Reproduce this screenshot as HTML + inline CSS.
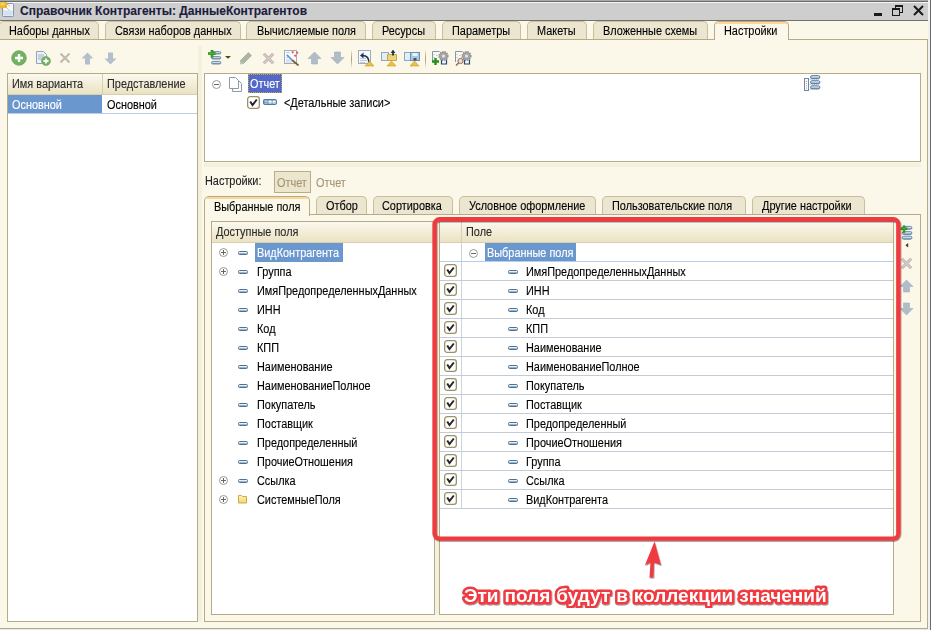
<!DOCTYPE html>
<html><head><meta charset="utf-8">
<style>
*{box-sizing:border-box;margin:0;padding:0}
html,body{width:931px;height:630px;overflow:hidden;background:#e6e6e6}
body{position:relative;font-family:"Liberation Sans",sans-serif;font-size:11px;color:#000}
.a{position:absolute}
.t{position:absolute;white-space:nowrap;line-height:13px;font-size:12px;margin-top:1px;transform:scaleX(0.908);transform-origin:0 0;-webkit-text-stroke:0.12px currentColor}
.t.nt{transform:none;margin-top:0}
#title{left:0;top:0;width:931px;height:21px;background:#cecece;border-top:2px solid #6c6c6c;border-bottom:1px solid #717171;box-shadow:inset 0 0 0 0 #000}
#title:after{content:"";position:absolute;left:0;right:0;top:-2px;height:1px;background:#a9a9a9}
#title:before{content:"";position:absolute;left:0;right:0;top:0;height:1px;background:#f4f4f4}
#main{left:0;top:21px;width:928px;height:608px;background:#fbf8ea;border-bottom:1px solid #b5ab87}
.tab{position:absolute;height:18px;background:#ece6d0;border:1px solid #c9bf9c;border-bottom:none;border-radius:5px 5px 0 0}
.tab .t{top:2px}
.tab.act{background:#fbf8ea;border-color:#b5ab87;height:19px}
.tab.act:before{content:"";position:absolute;left:1px;right:1px;top:0;height:2px;background:#fbd899;border-radius:3px 3px 0 0}
.box{position:absolute;background:#fff;border:1px solid #b5ab87}
.hdr{position:absolute;background:linear-gradient(#fbf9ef,#ebe2c2);border-bottom:1px solid #d8cfae}
.sel{position:absolute;background:#6b97cf;color:#fff}
.row{position:absolute;height:1px;background:#c3ccd6}
.pl{position:absolute;width:9px;height:9px;border:1px solid #9a9a9a;border-radius:50%}
.pl:before{content:"";position:absolute;left:1px;top:3px;width:5px;height:1px;background:#666}
.pl.plus:after{content:"";position:absolute;left:3px;top:1px;width:1px;height:5px;background:#666}
.fld{position:absolute;width:10px;height:4px;border-radius:1.5px;background:linear-gradient(#e8f1f8 25%,#7496b6);border:1px solid #4f7191}
.cb{position:absolute;width:13px;height:13px;border:1px solid #a09570;border-radius:3px;background:#fff}
.cb:after{content:"";position:absolute;left:3px;top:1px;width:4px;height:7px;border-right:2px solid #222;border-bottom:2px solid #222;transform:rotate(40deg)}
</style></head><body>

<!-- title bar -->
<div id="title" class="a">
  <svg class="a" style="left:0;top:-2px" width="16" height="18" viewBox="0 0 16 18">
    <rect x="2.5" y="3.5" width="11" height="13" rx="1" fill="#f6f9fc" stroke="#7f98ad"/>
    <rect x="3.3" y="10.5" width="9.4" height="5.2" fill="#d3e2ee"/>
    <rect x="0" y="2" width="7" height="6" fill="#e7b834"/>
    <rect x="0.5" y="2.5" width="4" height="3" fill="#f4d25c"/>
    <path d="M1.5 8.5l2 2M7.5 4.5l2 1.5M7.5 8.5l2 2" stroke="#d08f1c" stroke-width="1" stroke-dasharray="1 0.6"/>
  </svg>
  <div class="t nt" style="left:20px;top:3px;font-weight:bold;font-size:12px;color:#1c1c3c">Справочник Контрагенты: ДанныеКонтрагентов</div>
  <div class="a" style="left:874px;top:11px;width:8px;height:3px;background:#1a1a1a"></div>
  <div class="a" style="left:895px;top:3px;width:8px;height:8px;border:1px solid #1a1a1a;border-top-width:2px"></div>
  <div class="a" style="left:892px;top:6px;width:8px;height:8px;border:1px solid #1a1a1a;border-top-width:2px;background:#cacaca"></div>
  <svg class="a" style="left:913px;top:3px" width="11" height="11" viewBox="0 0 11 11"><path d="M1 1L10 10M10 1L1 10" stroke="#1a1a1a" stroke-width="2"/></svg>
</div>
<div class="a" style="left:928px;top:0;width:3px;height:630px;background:#f0f0f0;border-right:1px solid #6a6a6a"></div>

<div id="main" class="a">
</div>
<div class="a" style="left:927px;top:39px;width:1px;height:590px;background:#b5ab87"></div>

<!-- top tabs -->
<div class="tab" style="left:-1px;top:21px;width:100px"><div class="t" style="left:9px">Наборы данных</div></div>
<div class="tab" style="left:105px;top:21px;width:136px"><div class="t" style="left:9px">Связи наборов данных</div></div>
<div class="tab" style="left:246px;top:21px;width:120px"><div class="t" style="left:10px">Вычисляемые поля</div></div>
<div class="tab" style="left:372px;top:21px;width:64px"><div class="t" style="left:9px">Ресурсы</div></div>
<div class="tab" style="left:442px;top:21px;width:79px"><div class="t" style="left:9px">Параметры</div></div>
<div class="tab" style="left:527px;top:21px;width:60px"><div class="t" style="left:9px">Макеты</div></div>
<div class="tab" style="left:593px;top:21px;width:115px"><div class="t" style="left:9px">Вложенные схемы</div></div>
<div class="a" style="left:0;top:39px;width:928px;height:1px;background:#b5ab87"></div>
<div class="tab act" style="left:714px;top:21px;width:75px;height:19px"><div class="t" style="left:9px">Настройки</div></div>

<!-- left toolbar -->
<svg class="a" style="left:11px;top:50px" width="16" height="16" viewBox="0 0 16 16">
  <circle cx="8" cy="8" r="7.3" fill="#6fb45a" stroke="#7a9a70" stroke-width="0.8"/>
  <path d="M8 4v8M4 8h8" stroke="#fff" stroke-width="2.4"/>
</svg>
<svg class="a" style="left:35px;top:50px" width="16" height="16" viewBox="0 0 16 16">
  <path d="M1.5 1.5h7l3 3v9h-10z" fill="#eef2f7" stroke="#8ea4bd"/>
  <path d="M3 5h6M3 7h6M3 9h5" stroke="#9fb1c5"/>
  <circle cx="11" cy="11" r="4.5" fill="#6fb45a" stroke="#7a9a70" stroke-width="0.6"/>
  <path d="M11 8.5v5M8.5 11h5" stroke="#fff" stroke-width="1.8"/>
</svg>
<svg class="a" style="left:59px;top:52px" width="12" height="12" viewBox="0 0 12 12"><path d="M1.5 1.5l9 9M10.5 1.5l-9 9" stroke="#c3b9ae" stroke-width="2.2"/></svg>
<svg class="a" style="left:81px;top:52px" width="13" height="13" viewBox="0 0 13 13"><path d="M6.5 0.5L12.5 6.5H9V12.5H4V6.5H0.5Z" fill="#b3c0cc"/></svg>
<svg class="a" style="left:104px;top:52px" width="13" height="13" viewBox="0 0 13 13"><path d="M6.5 12.5L12.5 6.5H9V0.5H4V6.5H0.5Z" fill="#b3c0cc"/></svg>

<!-- left variants table -->
<div class="box" style="left:7px;top:73px;width:191px;height:549px">
  <div class="hdr" style="left:0;top:0;width:189px;height:21px"></div>
  <div class="a" style="left:94px;top:0;width:1px;height:21px;background:#d8cfae"></div>
  <div class="t" style="left:4px;top:3px;color:#2b2b2b">Имя варианта</div>
  <div class="t" style="left:99px;top:3px;color:#2b2b2b">Представление</div>
  <div class="sel" style="left:0;top:21px;width:94px;height:18px"></div>
  <div class="t" style="left:4px;top:24px;color:#fff">Основной</div>
  <div class="t" style="left:99px;top:24px">Основной</div>
  <div class="row" style="left:0;top:39px;width:189px;background:#b8cde6"></div>
</div>
<div class="a" style="left:198px;top:46px;width:4px;height:576px;background:#f3f0de"></div>

<!-- right toolbar -->
<div id="rtb">
<svg class="a" style="left:206px;top:48px" width="28" height="18" viewBox="0 0 28 18">
  <defs><linearGradient id="bar" x1="0" y1="0" x2="0" y2="1"><stop offset="0" stop-color="#e6eff7"/><stop offset="0.45" stop-color="#c5d7e7"/><stop offset="1" stop-color="#6f93b5"/></linearGradient></defs>
  <rect x="5.6" y="3.6" width="9.2" height="2.4" rx="1.2" fill="url(#bar)" stroke="#4f7396" stroke-width="0.8"/>
  <rect x="5.6" y="8.6" width="9.2" height="2.4" rx="1.2" fill="url(#bar)" stroke="#4f7396" stroke-width="0.8"/>
  <rect x="5.6" y="13.4" width="9.2" height="2.6" rx="1.2" fill="url(#bar)" stroke="#4f7396" stroke-width="0.8"/>
  <path d="M6 2v7.5M2 5.5h7.5" stroke="#227a14" stroke-width="2.6"/>
  <path d="M6 2.4v6.7M2.4 5.5h6.7" stroke="#45b82c" stroke-width="1.2"/>
  <path d="M19 8h6l-3 2.8z" fill="#5a4214"/>
</svg>
<svg class="a" style="left:239px;top:51px" width="14" height="14" viewBox="0 0 14 14">
  <path d="M1.5 13L1.5 9.5L9.5 1.5L12.5 4.5L4.5 12.5Z" fill="#aab6a2" stroke="#98a48f" stroke-width="0.6"/>
  <path d="M1.5 13L1.5 10L4 12.5Z" fill="#c9d0c2"/>
</svg>
<svg class="a" style="left:262px;top:52px" width="13" height="13" viewBox="0 0 13 13"><path d="M1.8 1.8l9.4 9.4M11.2 1.8l-9.4 9.4" stroke="#baaeaa" stroke-width="3"/><path d="M1.8 1.8l9.4 9.4M11.2 1.8l-9.4 9.4" stroke="#d6ccca" stroke-width="1.4"/></svg>
<svg class="a" style="left:283px;top:49px" width="17" height="17" viewBox="0 0 17 17">
  <rect x="1.5" y="1.5" width="12" height="13" fill="#f7f9fb" stroke="#9cadbd"/>
  <path d="M3 3.5h4M3 8.5h2M3 11h5M3 13h6" stroke="#b5c3d0" stroke-width="0.8"/>
  <path d="M9 11L15.5 16.5" stroke="#8a5a30" stroke-width="1.7"/>
  <path d="M3.8 5.8L9 11" stroke="#5a9ad6" stroke-width="1.7"/>
  <path d="M8.5 3.2h2.4M9.7 2v2.4M13 3.7h2.4M14.2 2.5v2.4M11 6.7h2.4M12.2 5.5v2.4" stroke="#f04848" stroke-width="0.9"/>
</svg>
<svg class="a" style="left:307px;top:51px" width="15" height="14" viewBox="0 0 15 14"><path d="M7.5 1L14 7.5H10.5V13H4.5V7.5H1Z" fill="#b0bcc7" stroke="#a2aeb9" stroke-width="0.6"/></svg>
<svg class="a" style="left:330px;top:51px" width="15" height="14" viewBox="0 0 15 14"><path d="M7.5 13L14 6.5H10.5V1H4.5V6.5H1Z" fill="#b0bcc7" stroke="#a2aeb9" stroke-width="0.6"/></svg>
<div class="a" style="left:351px;top:50px;width:1px;height:18px;background:linear-gradient(#f6f2e0,#b3a77f 40%,#b3a77f 60%,#f6f2e0)"></div>
<svg class="a" style="left:357px;top:49px" width="18" height="18" viewBox="0 0 18 18">
  <rect x="1.5" y="1.5" width="12" height="13" fill="#f7f9fb" stroke="#9cadbd"/>
  <path d="M3 9.5h6M3 11.5h7M3 13.5h5" stroke="#b5c3d0" stroke-width="0.8"/>
  <path d="M12 14C12 9 10 6.5 5.5 6.5" stroke="#1f3553" stroke-width="1.6" fill="none"/>
  <path d="M3 6.5L6.5 3.5V9.5Z" fill="#1f3553"/>
  <path d="M8 17L12.5 12L17 17Z" fill="#e9c24a" stroke="#c89a22" stroke-width="0.6"/>
</svg>
<svg class="a" style="left:380px;top:49px" width="18" height="18" viewBox="0 0 18 18">
  <rect x="1.5" y="3.5" width="7" height="8" fill="#e3edf6" stroke="#8ea7bf"/>
  <path d="M7.5 5.5h9v6h-9z" fill="#ecd37c" stroke="#c9a544"/>
  <path d="M13 1.5v5" stroke="#1d3350" stroke-width="1.8"/>
  <path d="M10.5 4L13 1L15.5 4Z" fill="#1d3350"/>
  <path d="M7 17L11.5 12L16 17Z" fill="#e9c24a" stroke="#c89a22" stroke-width="0.6"/>
</svg>
<svg class="a" style="left:403px;top:49px" width="18" height="18" viewBox="0 0 18 18">
  <rect x="1.5" y="3.5" width="7" height="8" fill="#e3edf6" stroke="#8ea7bf"/>
  <rect x="7.5" y="3.5" width="9" height="8" fill="#a9c9e2" stroke="#6b8fb0"/>
  <rect x="9.5" y="4" width="5" height="3" fill="#eef3f8"/>
  <rect x="10.5" y="9" width="3" height="2.5" fill="#3a5572"/>
  <path d="M7 17L11.5 12L16 17Z" fill="#e9c24a" stroke="#c89a22" stroke-width="0.6"/>
</svg>
<div class="a" style="left:425px;top:50px;width:1px;height:18px;background:linear-gradient(#f6f2e0,#b3a77f 40%,#b3a77f 60%,#f6f2e0)"></div>
<svg class="a" style="left:431px;top:49px" width="18" height="18" viewBox="0 0 18 18">
  <path d="M1.5 13V2.5h4M4.5 2.5h4" stroke="#7d98b5" fill="none"/>
  <path d="M3 5v1M3 8v1M6 6v1" stroke="#9aaec3"/>
  <path d="M10.5 10.5v4.5h5v-4.5" stroke="#27496b" stroke-width="1.2" fill="#f2f6fa"/>
  <circle cx="12.5" cy="7" r="4.3" fill="#a5a5a5" stroke="#8a8a8a" stroke-width="1.5" stroke-dasharray="1.3 1"/>
  <circle cx="12.5" cy="7" r="1.5" fill="#e8e8e8"/>
  <path d="M4.5 9v7M1 12.5h7" stroke="#23911a" stroke-width="2.4"/>
</svg>
<svg class="a" style="left:454px;top:49px" width="18" height="18" viewBox="0 0 18 18">
  <path d="M1.5 13V2.5h4M4.5 2.5h4" stroke="#7d98b5" fill="none"/>
  <path d="M3 5v1M3 8v1M6 6v1" stroke="#9aaec3"/>
  <path d="M10.5 10.5v4.5h5v-4.5" stroke="#27496b" stroke-width="1.2" fill="#f2f6fa"/>
  <circle cx="12.5" cy="7" r="4.3" fill="#a5a5a5" stroke="#8a8a8a" stroke-width="1.5" stroke-dasharray="1.3 1"/>
  <circle cx="12.5" cy="7" r="1.5" fill="#e8e8e8"/>
  <path d="M2 16.5L4.5 14" stroke="#a5693d" stroke-width="1.6"/>
  <circle cx="6.5" cy="12" r="2.6" fill="#cfe0f2" stroke="#a5693d" stroke-width="1"/>
</svg>
</div>


<!-- top tree panel -->
<div class="box" style="left:204px;top:73px;width:717px;height:89px">
  <div class="pl" style="left:7px;top:6px"></div>
  <svg class="a" style="left:24px;top:3px" width="14" height="15" viewBox="0 0 14 15">
    <path d="M3.5 3.5h6l3 3v8h-9z" fill="#fff" stroke="#8d9aa8"/>
    <path d="M0.5 0.5h6l3 3v8h-9z" fill="#fff" stroke="#8d9aa8"/>
  </svg>
  <div class="a" style="left:43px;top:0px;width:34px;height:19px;background:#5468c7;outline:1px dotted #c9a64a;outline-offset:-1px"></div>
  <div class="t" style="left:45px;top:3px;color:#fff">Отчет</div>
  <svg class="a" style="left:42px;top:22px" width="13" height="13" viewBox="0 0 13 13"><rect x="0.65" y="0.65" width="11.7" height="11.7" rx="2.6" fill="#fff" stroke="#9b9169" stroke-width="1.3"/><path d="M3.2 5.5L5.5 9L9.8 3.5" stroke="#262626" stroke-width="2" fill="none"/></svg>
  <svg class="a" style="left:58px;top:25px" width="14" height="6" viewBox="0 0 14 6"><rect x="0.5" y="0.5" width="13" height="5" rx="1.2" fill="#6a93bd" stroke="#4f7aa3"/><rect x="1.6" y="1.6" width="3" height="1" fill="#e8f0f8"/><rect x="1.6" y="3.4" width="3" height="1.6" fill="#9ebbd8"/><rect x="5.6" y="1.5" width="3" height="3" fill="#fff"/><rect x="9.6" y="1.5" width="3" height="3" fill="#fff"/><rect x="6.7" y="3" width="0.8" height="1" fill="#8aa"/><rect x="10.7" y="3" width="0.8" height="1" fill="#8aa"/></svg>
  <div class="t" style="left:79px;top:22px">&lt;Детальные записи&gt;</div>
  <svg class="a" style="left:598px;top:0px" width="18" height="18" viewBox="0 0 18 18">
    <path d="M5.5 5.5H16M5.5 10.5H16M5.5 15.5H16" stroke="#c3cad2" stroke-dasharray="1.2 0.6"/>
    <rect x="1.5" y="4.5" width="4" height="12" fill="#fff" stroke="#75869a"/>
    <path d="M3.5 7v8" stroke="#8a98a8" stroke-dasharray="1 1.2"/>
    <rect x="7.5" y="1.6" width="9.4" height="3" rx="1.5" fill="url(#bar)" stroke="#4f7396" stroke-width="0.9"/>
    <rect x="7.5" y="6.7" width="9.4" height="3" rx="1.5" fill="url(#bar)" stroke="#4f7396" stroke-width="0.9"/>
    <rect x="7.5" y="11.8" width="9.4" height="3" rx="1.5" fill="url(#bar)" stroke="#4f7396" stroke-width="0.9"/>
  </svg>
</div>
<div class="a" style="left:204px;top:163px;width:717px;height:4px;background:#f3f0de"></div>

<!-- settings line -->
<div class="t" style="left:205px;top:174px;color:#222">Настройки:</div>
<div class="a" style="left:274px;top:171px;width:37px;height:22px;background:#ece6cf;border:1px solid #b8ad85"></div>
<div class="t" style="left:277px;top:176px;color:#a39474">Отчет</div>
<div class="t" style="left:316px;top:176px;color:#a39474">Отчет</div>

<!-- inner tabs -->
<div class="a" style="left:204px;top:214px;width:717px;height:408px;border:1px solid #b5ab87;border-top-color:#b5ab87;background:#fbf8ea"></div>
<div class="tab act" style="left:204px;top:196px;width:106px;height:20px"><div class="t" style="left:9px;top:3px">Выбранные поля</div></div>
<div class="tab" style="left:316px;top:196px;width:51px"><div class="t" style="left:9px;top:2px">Отбор</div></div>
<div class="tab" style="left:373px;top:196px;width:80px"><div class="t" style="left:8px;top:2px">Сортировка</div></div>
<div class="tab" style="left:459px;top:196px;width:137px"><div class="t" style="left:9px;top:2px">Условное оформление</div></div>
<div class="tab" style="left:602px;top:196px;width:144px"><div class="t" style="left:9px;top:2px">Пользовательские поля</div></div>
<div class="tab" style="left:752px;top:196px;width:113px"><div class="t" style="left:9px;top:2px">Другие настройки</div></div>

<!-- available fields -->
<div class="box" style="left:211px;top:221px;width:224px;height:394px">
  <div class="hdr" style="left:0;top:0;width:222px;height:21px"></div>
  <div class="t" style="left:4px;top:3px;color:#2b2b2b">Доступные поля</div>
  <div class="pl plus" style="left:7px;top:26px"></div>
<div class="fld" style="left:26px;top:29px"></div>
<div class="sel" style="left:43px;top:21px;width:88px;height:19px"></div>
<div class="t" style="left:45px;top:24px;color:#fff">ВидКонтрагента</div>
<div class="pl plus" style="left:7px;top:45px"></div>
<div class="fld" style="left:26px;top:48px"></div>
<div class="t" style="left:45px;top:43px">Группа</div>
<div class="fld" style="left:26px;top:67px"></div>
<div class="t" style="left:45px;top:62px">ИмяПредопределенныхДанных</div>
<div class="fld" style="left:26px;top:86px"></div>
<div class="t" style="left:45px;top:81px">ИНН</div>
<div class="fld" style="left:26px;top:105px"></div>
<div class="t" style="left:45px;top:100px">Код</div>
<div class="fld" style="left:26px;top:124px"></div>
<div class="t" style="left:45px;top:119px">КПП</div>
<div class="fld" style="left:26px;top:143px"></div>
<div class="t" style="left:45px;top:138px">Наименование</div>
<div class="fld" style="left:26px;top:162px"></div>
<div class="t" style="left:45px;top:157px">НаименованиеПолное</div>
<div class="fld" style="left:26px;top:181px"></div>
<div class="t" style="left:45px;top:176px">Покупатель</div>
<div class="fld" style="left:26px;top:200px"></div>
<div class="t" style="left:45px;top:195px">Поставщик</div>
<div class="fld" style="left:26px;top:219px"></div>
<div class="t" style="left:45px;top:214px">Предопределенный</div>
<div class="fld" style="left:26px;top:238px"></div>
<div class="t" style="left:45px;top:233px">ПрочиеОтношения</div>
<div class="pl plus" style="left:7px;top:254px"></div>
<div class="fld" style="left:26px;top:257px"></div>
<div class="t" style="left:45px;top:252px">Ссылка</div>
<div class="pl plus" style="left:7px;top:273px"></div>
<svg class="a" style="left:26px;top:272px" width="10" height="10" viewBox="0 0 10 10"><defs><linearGradient id="fg" x1="0" y1="0" x2="0" y2="1"><stop offset="0" stop-color="#fdf3b8"/><stop offset="1" stop-color="#f1d66e"/></linearGradient></defs><path d="M0.5 1.5h3l1 1h4v6.5h-8z" fill="url(#fg)" stroke="#cfa94a"/></svg>
<div class="t" style="left:45px;top:271px">СистемныеПоля</div>
</div>

<!-- selected fields -->
<div class="a" style="left:435px;top:221px;width:4px;height:394px;background:#f3f0dc"></div>
<div class="box" style="left:439px;top:221px;width:455px;height:394px">
  <div class="hdr" style="left:0;top:0;width:453px;height:21px"></div>
  <div class="a" style="left:21px;top:0;width:1px;height:21px;background:#d8cfae"></div>
  <div class="t" style="left:26px;top:3px;color:#2b2b2b">Поле</div>
  <div class="a" style="left:21px;top:21px;width:1px;height:266px;background:#c9d4e0"></div>
<div class="pl" style="left:29px;top:27px"></div>
<div class="sel" style="left:45px;top:21px;width:91px;height:19px"></div>
<div class="t" style="left:47px;top:24px;color:#fff">Выбранные поля</div>
<div class="row" style="left:0;top:39px;width:453px;background:#b8cde6"></div>
<svg class="a" style="left:4px;top:42px" width="13" height="13" viewBox="0 0 13 13"><rect x="0.65" y="0.65" width="11.7" height="11.7" rx="2.6" fill="#fff" stroke="#9b9169" stroke-width="1.3"/><path d="M3.2 5.5L5.5 9L9.8 3.5" stroke="#262626" stroke-width="2" fill="none"/></svg>
<div class="fld" style="left:68px;top:48px"></div>
<div class="t" style="left:86px;top:43px">ИмяПредопределенныхДанных</div>
<div class="row" style="left:0;top:58px;width:453px"></div>
<svg class="a" style="left:4px;top:61px" width="13" height="13" viewBox="0 0 13 13"><rect x="0.65" y="0.65" width="11.7" height="11.7" rx="2.6" fill="#fff" stroke="#9b9169" stroke-width="1.3"/><path d="M3.2 5.5L5.5 9L9.8 3.5" stroke="#262626" stroke-width="2" fill="none"/></svg>
<div class="fld" style="left:68px;top:67px"></div>
<div class="t" style="left:86px;top:62px">ИНН</div>
<div class="row" style="left:0;top:77px;width:453px"></div>
<svg class="a" style="left:4px;top:80px" width="13" height="13" viewBox="0 0 13 13"><rect x="0.65" y="0.65" width="11.7" height="11.7" rx="2.6" fill="#fff" stroke="#9b9169" stroke-width="1.3"/><path d="M3.2 5.5L5.5 9L9.8 3.5" stroke="#262626" stroke-width="2" fill="none"/></svg>
<div class="fld" style="left:68px;top:86px"></div>
<div class="t" style="left:86px;top:81px">Код</div>
<div class="row" style="left:0;top:96px;width:453px"></div>
<svg class="a" style="left:4px;top:99px" width="13" height="13" viewBox="0 0 13 13"><rect x="0.65" y="0.65" width="11.7" height="11.7" rx="2.6" fill="#fff" stroke="#9b9169" stroke-width="1.3"/><path d="M3.2 5.5L5.5 9L9.8 3.5" stroke="#262626" stroke-width="2" fill="none"/></svg>
<div class="fld" style="left:68px;top:105px"></div>
<div class="t" style="left:86px;top:100px">КПП</div>
<div class="row" style="left:0;top:115px;width:453px"></div>
<svg class="a" style="left:4px;top:118px" width="13" height="13" viewBox="0 0 13 13"><rect x="0.65" y="0.65" width="11.7" height="11.7" rx="2.6" fill="#fff" stroke="#9b9169" stroke-width="1.3"/><path d="M3.2 5.5L5.5 9L9.8 3.5" stroke="#262626" stroke-width="2" fill="none"/></svg>
<div class="fld" style="left:68px;top:124px"></div>
<div class="t" style="left:86px;top:119px">Наименование</div>
<div class="row" style="left:0;top:134px;width:453px"></div>
<svg class="a" style="left:4px;top:137px" width="13" height="13" viewBox="0 0 13 13"><rect x="0.65" y="0.65" width="11.7" height="11.7" rx="2.6" fill="#fff" stroke="#9b9169" stroke-width="1.3"/><path d="M3.2 5.5L5.5 9L9.8 3.5" stroke="#262626" stroke-width="2" fill="none"/></svg>
<div class="fld" style="left:68px;top:143px"></div>
<div class="t" style="left:86px;top:138px">НаименованиеПолное</div>
<div class="row" style="left:0;top:153px;width:453px"></div>
<svg class="a" style="left:4px;top:156px" width="13" height="13" viewBox="0 0 13 13"><rect x="0.65" y="0.65" width="11.7" height="11.7" rx="2.6" fill="#fff" stroke="#9b9169" stroke-width="1.3"/><path d="M3.2 5.5L5.5 9L9.8 3.5" stroke="#262626" stroke-width="2" fill="none"/></svg>
<div class="fld" style="left:68px;top:162px"></div>
<div class="t" style="left:86px;top:157px">Покупатель</div>
<div class="row" style="left:0;top:172px;width:453px"></div>
<svg class="a" style="left:4px;top:175px" width="13" height="13" viewBox="0 0 13 13"><rect x="0.65" y="0.65" width="11.7" height="11.7" rx="2.6" fill="#fff" stroke="#9b9169" stroke-width="1.3"/><path d="M3.2 5.5L5.5 9L9.8 3.5" stroke="#262626" stroke-width="2" fill="none"/></svg>
<div class="fld" style="left:68px;top:181px"></div>
<div class="t" style="left:86px;top:176px">Поставщик</div>
<div class="row" style="left:0;top:191px;width:453px"></div>
<svg class="a" style="left:4px;top:194px" width="13" height="13" viewBox="0 0 13 13"><rect x="0.65" y="0.65" width="11.7" height="11.7" rx="2.6" fill="#fff" stroke="#9b9169" stroke-width="1.3"/><path d="M3.2 5.5L5.5 9L9.8 3.5" stroke="#262626" stroke-width="2" fill="none"/></svg>
<div class="fld" style="left:68px;top:200px"></div>
<div class="t" style="left:86px;top:195px">Предопределенный</div>
<div class="row" style="left:0;top:210px;width:453px"></div>
<svg class="a" style="left:4px;top:213px" width="13" height="13" viewBox="0 0 13 13"><rect x="0.65" y="0.65" width="11.7" height="11.7" rx="2.6" fill="#fff" stroke="#9b9169" stroke-width="1.3"/><path d="M3.2 5.5L5.5 9L9.8 3.5" stroke="#262626" stroke-width="2" fill="none"/></svg>
<div class="fld" style="left:68px;top:219px"></div>
<div class="t" style="left:86px;top:214px">ПрочиеОтношения</div>
<div class="row" style="left:0;top:229px;width:453px"></div>
<svg class="a" style="left:4px;top:232px" width="13" height="13" viewBox="0 0 13 13"><rect x="0.65" y="0.65" width="11.7" height="11.7" rx="2.6" fill="#fff" stroke="#9b9169" stroke-width="1.3"/><path d="M3.2 5.5L5.5 9L9.8 3.5" stroke="#262626" stroke-width="2" fill="none"/></svg>
<div class="fld" style="left:68px;top:238px"></div>
<div class="t" style="left:86px;top:233px">Группа</div>
<div class="row" style="left:0;top:248px;width:453px"></div>
<svg class="a" style="left:4px;top:251px" width="13" height="13" viewBox="0 0 13 13"><rect x="0.65" y="0.65" width="11.7" height="11.7" rx="2.6" fill="#fff" stroke="#9b9169" stroke-width="1.3"/><path d="M3.2 5.5L5.5 9L9.8 3.5" stroke="#262626" stroke-width="2" fill="none"/></svg>
<div class="fld" style="left:68px;top:257px"></div>
<div class="t" style="left:86px;top:252px">Ссылка</div>
<div class="row" style="left:0;top:267px;width:453px"></div>
<svg class="a" style="left:4px;top:270px" width="13" height="13" viewBox="0 0 13 13"><rect x="0.65" y="0.65" width="11.7" height="11.7" rx="2.6" fill="#fff" stroke="#9b9169" stroke-width="1.3"/><path d="M3.2 5.5L5.5 9L9.8 3.5" stroke="#262626" stroke-width="2" fill="none"/></svg>
<div class="fld" style="left:68px;top:276px"></div>
<div class="t" style="left:86px;top:271px">ВидКонтрагента</div>
<div class="row" style="left:0;top:286px;width:453px"></div>
</div>

<!-- annotation -->
<div id="side">
<!-- side buttons -->
<svg class="a" style="left:900px;top:224px" width="14" height="25" viewBox="0 0 14 25">
  <rect x="2.3" y="2.4" width="9.6" height="2.8" rx="1.4" fill="url(#bar)" stroke="#4f7396" stroke-width="0.8"/>
  <rect x="2.3" y="7.6" width="9.6" height="2.8" rx="1.4" fill="url(#bar)" stroke="#4f7396" stroke-width="0.8"/>
  <rect x="2.3" y="12.2" width="9.6" height="3" rx="1.4" fill="url(#bar)" stroke="#4f7396" stroke-width="0.8"/>
  <path d="M4 1.4v7.4M0.5 4.8h6.8" stroke="#227a14" stroke-width="2.4"/><path d="M4 1.8v6.6M0.9 4.8h6" stroke="#45b82c" stroke-width="1"/>
  <path d="M8.2 19v4.5l-2.8-2.2z" fill="#4a3a1a"/>
</svg>
<svg class="a" style="left:900px;top:257px" width="13" height="13" viewBox="0 0 13 13"><path d="M1.8 1.8l9.4 9.4M11.2 1.8l-9.4 9.4" stroke="#baaeaa" stroke-width="3"/><path d="M1.8 1.8l9.4 9.4M11.2 1.8l-9.4 9.4" stroke="#d6ccca" stroke-width="1.4"/></svg>
<svg class="a" style="left:899px;top:279px" width="15" height="14" viewBox="0 0 15 14"><path d="M7.5 1L14 7.5H10.5V13H4.5V7.5H1Z" fill="#b0bcc7" stroke="#a2aeb9" stroke-width="0.6"/></svg>
<svg class="a" style="left:899px;top:302px" width="15" height="14" viewBox="0 0 15 14"><path d="M7.5 13L14 6.5H10.5V1H4.5V6.5H1Z" fill="#b0bcc7" stroke="#a2aeb9" stroke-width="0.6"/></svg>
</div>
<div id="ann">
<svg class="a" style="left:0;top:0" width="931" height="630" viewBox="0 0 931 630">
  <defs>
    <filter id="sh" x="-5%" y="-5%" width="110%" height="110%"><feDropShadow dx="0.6" dy="1" stdDeviation="0.6" flood-color="#000" flood-opacity="0.45"/></filter>
  </defs>
  <rect x="434.6" y="219.3" width="463.8" height="319.3" rx="5" fill="none" stroke="#ef3a40" stroke-width="4.4" filter="url(#sh)"/>
  <path d="M654.5 541.5L661 565L654 562.5L653.5 577.5L649.5 577.5L650.5 562.5L645 565Z" fill="#ef3a40" filter="url(#sh)"/>
  <text x="464" y="602" style="word-spacing:0.7px" font-family="Liberation Sans" font-weight="bold" font-size="19" fill="#fff" stroke="#ef3a40" stroke-width="5" stroke-linejoin="round" paint-order="stroke" filter="url(#sh)">Эти поля будут в коллекции значений</text>
</svg>
</div>


</body></html>
